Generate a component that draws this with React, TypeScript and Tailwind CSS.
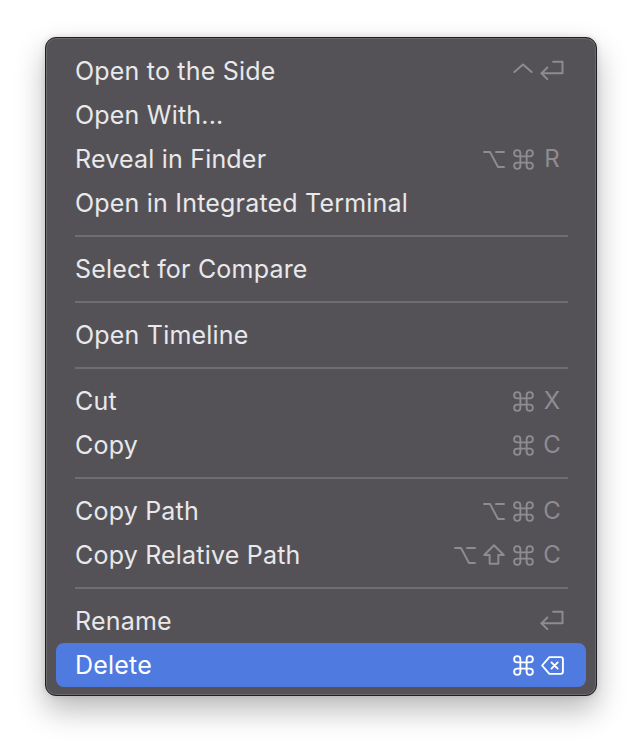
import type { ReactNode } from 'react';

type Key = 'ctrl' | 'return' | 'opt' | 'cmd' | 'shift' | 'delete' | string;

type MenuItem = {
  label: string;
  keys?: Key[];
  active?: boolean;
};

const groups: MenuItem[][] = [
  [
    { label: 'Open to the Side', keys: ['ctrl', 'return'] },
    { label: 'Open With...' },
    { label: 'Reveal in Finder', keys: ['opt', 'cmd', 'R'] },
    { label: 'Open in Integrated Terminal' }
  ],
  [{ label: 'Select for Compare' }],
  [{ label: 'Open Timeline' }],
  [
    { label: 'Cut', keys: ['cmd', 'X'] },
    { label: 'Copy', keys: ['cmd', 'C'] }
  ],
  [
    { label: 'Copy Path', keys: ['opt', 'cmd', 'C'] },
    { label: 'Copy Relative Path', keys: ['opt', 'shift', 'cmd', 'C'] }
  ],
  [
    { label: 'Rename', keys: ['return'] },
    { label: 'Delete', keys: ['cmd', 'delete'], active: true }
  ]
];

function Glyph({ children, size = 22, stroke = 2 }: { children: ReactNode; size?: number; stroke?: number }) {
  return (
    <svg
      width={size}
      height={size}
      viewBox="0 0 24 24"
      fill="none"
      stroke="currentColor"
      strokeWidth={stroke}
      strokeLinecap="round"
      strokeLinejoin="round"
      className="shrink-0"
      aria-hidden="true"
    >
      {children}
    </svg>
  );
}

function KeyGlyph({ k }: { k: Key }) {
  switch (k) {
    case 'ctrl':
      return (
        <Glyph size={26} stroke={1.8}>
          <path d="M4 13l8-7 8 7" />
        </Glyph>
      );
    case 'return':
      return (
        <Glyph size={28} stroke={1.7}>
          <path d="M13 4h8v10H3" />
          <path d="M8 9l-5 5 5 5" />
        </Glyph>
      );
    case 'opt':
      return (
        <Glyph size={24} stroke={1.9}>
          <path d="M2 5h6l8 15h6" />
          <path d="M14 5h8" />
        </Glyph>
      );
    case 'cmd':
      return (
        <Glyph size={25} stroke={1.8}>
          <path d="M15 6v12a3 3 0 1 0 3-3H6a3 3 0 1 0 3 3V6a3 3 0 1 0-3 3h12a3 3 0 1 0-3-3" />
        </Glyph>
      );
    case 'shift':
      return (
        <Glyph size={26} stroke={1.8}>
          <path d="M12 3l9 9h-5v8H8v-8H3z" />
        </Glyph>
      );
    case 'delete':
      return (
        <Glyph size={25} stroke={1.8}>
          <path d="M9 4h11a2 2 0 0 1 2 2v12a2 2 0 0 1-2 2H9l-7-8z" />
          <path d="M11 9l6 6M17 9l-6 6" />
        </Glyph>
      );
    default:
      return <span className="text-[24px] leading-none">{k}</span>;
  }
}

function Shortcut({ keys }: { keys: Key[] }) {
  return (
    <div className="flex items-center gap-[7px]">
      {keys.map((k, i) => (
        <span key={i} className="flex h-[22px] w-[22px] items-center justify-center">
          <KeyGlyph k={k} />
        </span>
      ))}
    </div>
  );
}

function Row({ item }: { item: MenuItem }) {
  return (
    <div
      className={
        item.active
          ? 'flex h-[44px] items-center justify-between rounded-lg bg-[#4f7be0] pl-[19px] pr-[23px] text-white'
          : 'flex h-[44px] items-center justify-between rounded-lg pl-[19px] pr-[23px] text-[#e9e8ea]'
      }
    >
      <span className="text-[25px] leading-none tracking-[0.2px]">{item.label}</span>
      {item.keys ? (
        <div className={item.active ? 'text-white' : 'text-[#8e8c91]'}>
          <Shortcut keys={item.keys} />
        </div>
      ) : null}
    </div>
  );
}

export default function App() {
  return (
    <div className="h-[750px] w-full bg-white pl-[45px] pt-[37px] font-['Inter','Liberation_Sans',sans-serif]">
      <div className="w-[552px] rounded-[11px] border border-[#1f1f21] bg-[#545257] px-[10px] pb-[8px] pt-[11px] shadow-[inset_0_0_0_1px_#6c6a6f,0_14px_30px_rgba(0,0,0,0.28),0_0_6px_rgba(0,0,0,0.12)]">
        {groups.map((group, gi) => (
          <div key={gi}>
            {gi > 0 ? (
              <div className="flex h-[22px] items-center pl-[19px] pr-[18px]">
                <div className="h-[2px] w-full bg-[#6f6d72]" />
              </div>
            ) : null}
            {group.map((item) => (
              <Row key={item.label} item={item} />
            ))}
          </div>
        ))}
      </div>
    </div>
  );
}
